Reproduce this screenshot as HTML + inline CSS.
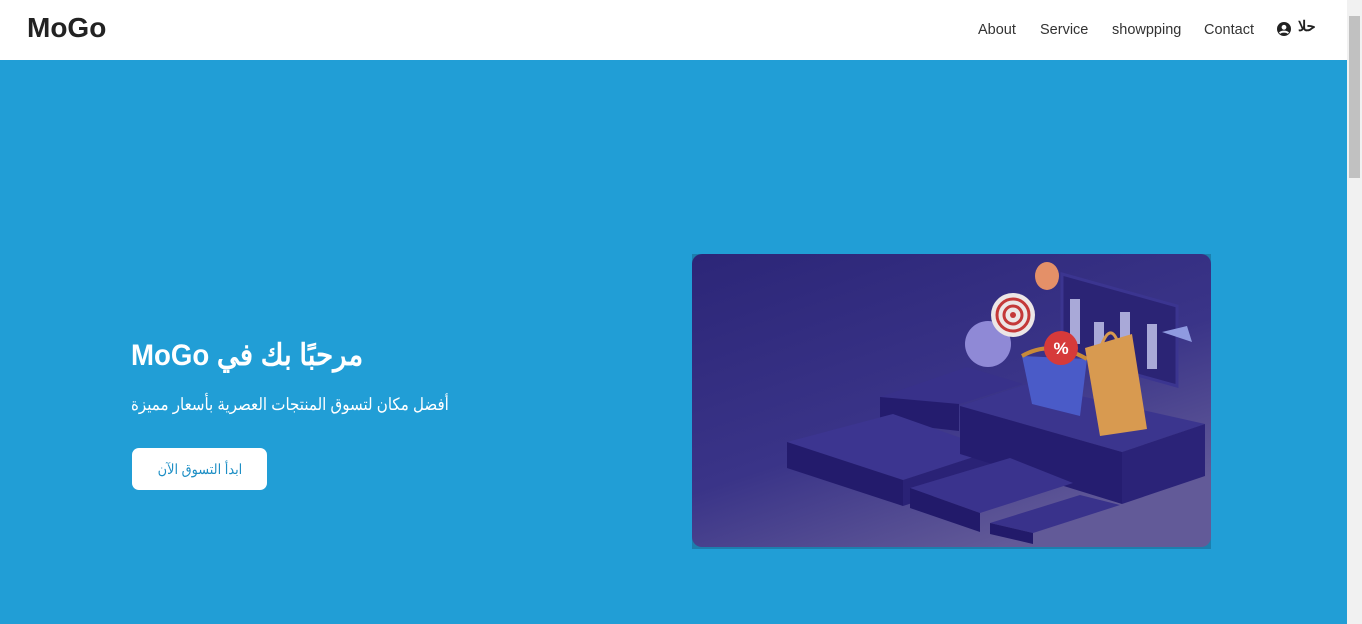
<!DOCTYPE html>
<html><head><meta charset="utf-8"><style>
*{margin:0;padding:0;box-sizing:border-box}
html,body{width:1362px;height:624px;overflow:hidden;background:#219ed6;font-family:"Liberation Sans","Noto Sans CJK SC",sans-serif}
.nav{position:absolute;left:0;top:0;width:1347px;height:60px;background:#fff}
.logo{position:absolute;left:27px;top:12px;font-size:28px;font-weight:bold;color:#222}
.links{position:absolute;top:22px;font-size:14.5px;color:#333}
.sb{position:absolute;right:0;top:0;width:15px;height:624px;background:#f1f1f1}
.thumb{position:absolute;right:2px;top:16px;width:11px;height:162px;background:#c1c1c1}
h1{position:absolute;left:131px;top:338px;font-size:30px;color:#fff;font-weight:bold;direction:rtl;white-space:nowrap;transform:scaleX(0.92);transform-origin:left center}
.sub{position:absolute;left:131px;top:395px;font-size:17px;color:#fff;direction:rtl;white-space:nowrap;transform:scaleX(0.886);transform-origin:left center}
.btn{position:absolute;left:132px;top:448px;width:135px;height:42px;background:#fff;border-radius:7px;color:#1e8fc5;font-size:14px;text-align:center;line-height:42px}
.btn span{display:inline-block;transform:scaleX(0.92)}
.img{position:absolute;left:692px;top:254px;width:519px;height:295px;background:#1c7fae}
</style></head><body>
<div class="nav">
<div class="logo">MoGo</div>
<span class="links" style="left:978px">About</span>
<span class="links" style="left:1040px">Service</span>
<span class="links" style="left:1112px">showpping</span>
<span class="links" style="left:1204px">Contact</span>
<svg style="position:absolute;left:1277px;top:22px" width="14" height="14" viewBox="0 0 14 14"><circle cx="7" cy="7" r="7" fill="#222"/><circle cx="7" cy="5.3" r="2.4" fill="#fff"/><path d="M2.8 11.3C4 9 10 9 11.2 11.3" stroke="#fff" stroke-width="2" fill="none"/></svg>
<span class="links" style="left:1298px;top:19px;font-weight:bold;color:#222">حلا</span>
</div>
<div class="sb"><div class="thumb"></div></div>
<h1>مرحبًا بك في MoGo</h1>
<div class="sub">أفضل مكان لتسوق المنتجات العصرية بأسعار مميزة</div>
<div class="btn"><span>ابدأ التسوق الآن</span></div>
<div class="img">
<svg width="519" height="293" viewBox="0 0 519 293" style="display:block">
<defs><linearGradient id="g" x1="0" y1="0" x2="0.6" y2="1"><stop offset="0" stop-color="#2c2678"/><stop offset="0.6" stop-color="#3a3488"/><stop offset="1" stop-color="#625a98"/></linearGradient></defs>
<rect width="519" height="293" rx="10" fill="url(#g)"/>
<polygon points="188,143 275,113 331,130 267,150" fill="#38318a"/>
<polygon points="188,143 267,150 267,177 188,168" fill="#241c6e"/>
<polygon points="95,188 201,160 303,196 211,226" fill="#3c3590"/>
<polygon points="95,188 211,226 211,252 95,214" fill="#231b6c"/>
<polygon points="211,226 303,196 303,222 211,252" fill="#2a2276"/>
<polygon points="268,152 335,130 513,170 430,198" fill="#3b358e"/>
<polygon points="268,152 430,198 430,250 268,200" fill="#251d70"/>
<polygon points="430,198 513,170 513,222 430,250" fill="#2b2378"/>
<polygon points="218,234 318,204 381,229 288,259" fill="#3a338d"/>
<polygon points="218,234 288,259 288,278 218,254" fill="#221a6a"/>
<polygon points="298,269 388,241 428,251 341,279" fill="#39328b"/>
<polygon points="298,269 341,279 341,290 298,280" fill="#221a6a"/>
<polygon points="370,20 485,52 485,132 370,100" fill="#2b2475" stroke="#3b3590" stroke-width="3"/>
<rect x="378" y="45" width="10" height="45" fill="#a9a9d8"/><rect x="402" y="68" width="10" height="30" fill="#a9a9d8"/><rect x="428" y="58" width="10" height="40" fill="#a9a9d8"/><rect x="455" y="70" width="10" height="45" fill="#a9a9d8"/>
<circle cx="296" cy="90" r="23" fill="#8f89d6"/>
<circle cx="321" cy="61" r="22" fill="#ece6e6"/><circle cx="321" cy="61" r="16" fill="none" stroke="#c43838" stroke-width="3"/><circle cx="321" cy="61" r="9" fill="none" stroke="#c43838" stroke-width="3"/><circle cx="321" cy="61" r="3" fill="#c43838"/>
<ellipse cx="355" cy="22" rx="12" ry="14" fill="#e49068"/>
<path d="M330,102 L395,105 L388,162 L340,150 Z" fill="#4a5bc8"/>
<path d="M330,102 Q360,85 395,105" fill="none" stroke="#c88a3a" stroke-width="4"/>
<circle cx="369" cy="94" r="17" fill="#d63a3a"/><text x="369" y="100" fill="#fff" font-size="17" font-weight="bold" text-anchor="middle" font-family="Liberation Sans">%</text>
<polygon points="393,94 440,80 455,175 408,182" fill="#d89a50"/>
<path d="M410,90 Q418,70 425,86" stroke="#d89a50" stroke-width="3" fill="none"/>
<path d="M470,78 L495,72 L500,88 Z" fill="#8f9ae0"/>
</svg></div>
</body></html>
